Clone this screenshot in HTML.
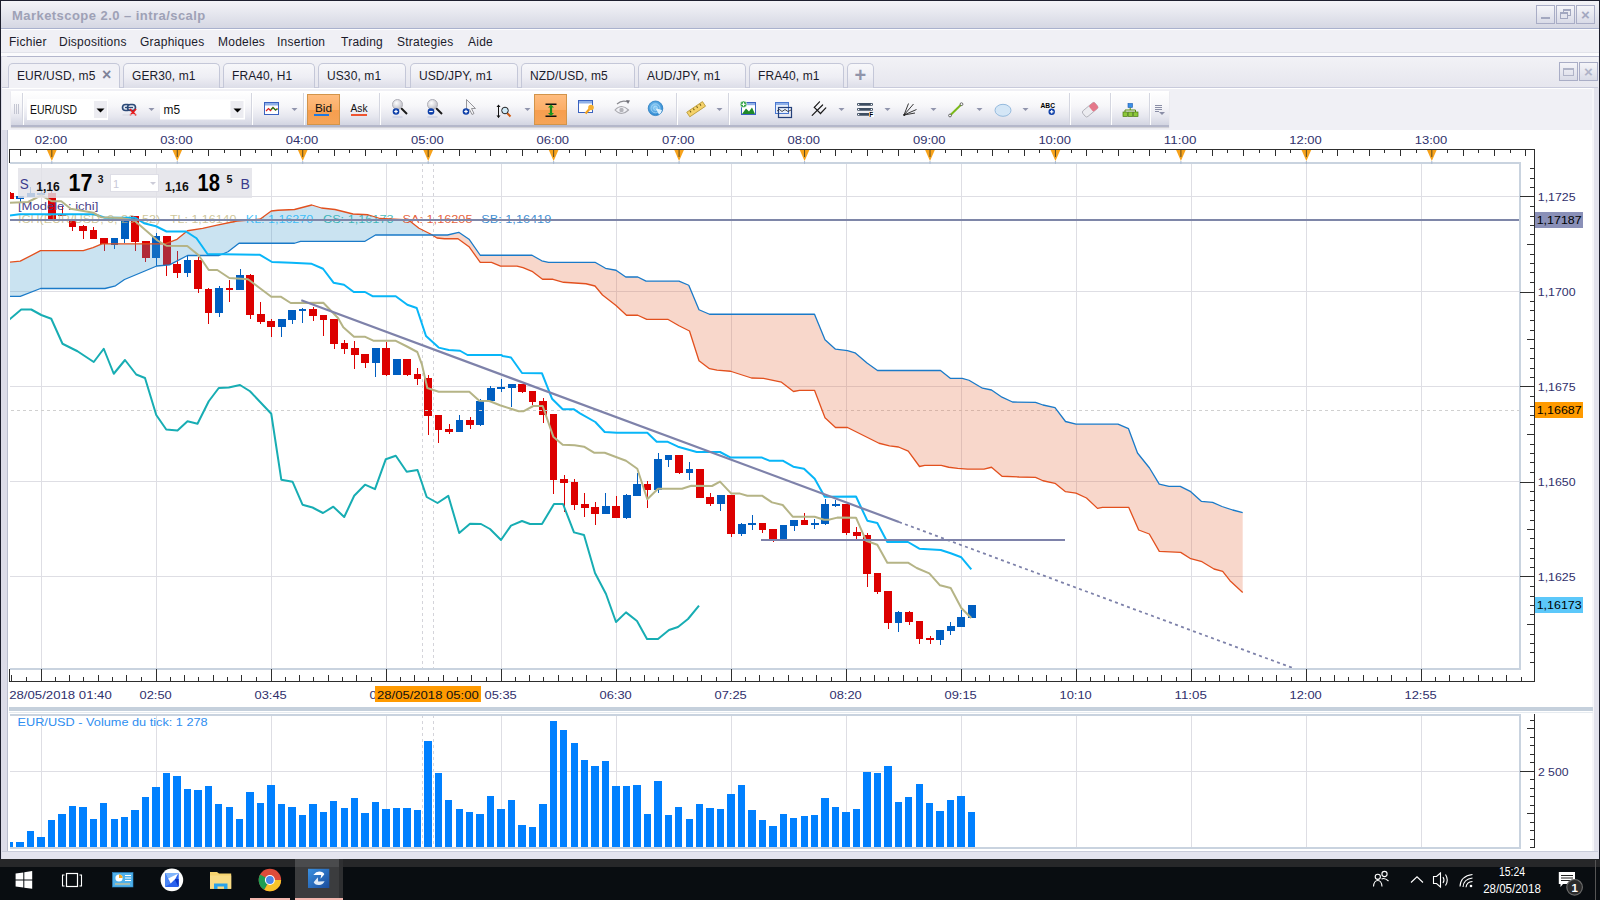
<!DOCTYPE html>
<html><head><meta charset="utf-8">
<style>
*{margin:0;padding:0;box-sizing:border-box}
html,body{width:1600px;height:900px;overflow:hidden;background:#e9e9f1;font-family:"Liberation Sans",sans-serif}
.a{position:absolute}
#frameL{left:0;top:0;width:1px;height:860px;background:#1c1e2c}
#frameR{left:1599px;top:0;width:1px;height:860px;background:#1c1e2c}
#title{left:0;top:0;width:1600px;height:29px;background:linear-gradient(#f4f4f8,#d5d7e3);border-top:1px solid #1e2030;border-bottom:1px solid #a9b1cd}
#title span{position:absolute;left:12px;top:7px;font-size:13px;font-weight:bold;color:#9ea1b6;letter-spacing:0.45px}
.wb{position:absolute;top:4px;width:19px;height:19px;border:1px solid #a9adc6;background:linear-gradient(#f5f5f9,#d9dbe7)}
#menu{left:0;top:29px;width:1600px;height:28px;background:#f0f0f5;border-top:1px solid #fdfdfe;border-bottom:1px solid #b3b6cc;box-shadow:inset 0 -3px 0 #fbfbfd,inset 0 -4px 0 #e2e3ea}
#menu span{position:absolute;top:4.5px;font-size:12px;color:#1b1b2b;letter-spacing:0.25px}
#tabs{left:2px;top:57px;width:1596px;height:31px;background:linear-gradient(#f2f2f6,#e6e6ee);border-bottom:1px solid #c8cadb}
.tab{position:absolute;top:6px;height:25px;border:1px solid #c4c7d8;border-bottom:none;border-radius:5px 5px 0 0;background:linear-gradient(#f7f7fa 0%,#eeeef4 55%,#dcdde8 100%);font-size:12px;color:#1b1b2b;padding:5px 0 0 8px;letter-spacing:0.1px}
.tab.act{background:#f1f1f6;height:26px;padding-left:8px}
#band{left:2px;top:88px;width:1596px;height:42px;background:#f0f0f5;border-top:1px solid #fff}
#tb{left:11px;top:91px;width:1158px;height:36px;background:linear-gradient(#ffffff 0%,#f6f6f9 45%,#e6e7ef 75%,#d3d5e2 100%);border-bottom:2px solid #b4b7ca;box-shadow:0 1px 1px rgba(0,0,0,0.12)}
.cb{position:absolute;top:9px;height:21px;background:#fff;font-size:12px;color:#111;padding:4px 0 0 3px}
.sep{position:absolute;top:4px;width:1px;height:28px;background:#d6d8e2;border-right:1px solid #fff}
.dd{position:absolute;top:17px;width:0;height:0;border-left:4px solid transparent;border-right:4px solid transparent;border-top:4px solid #8f93a8}
#white{left:8px;top:130px;width:1585px;height:722px;background:#fff}
#rbar{left:1592px;top:88px;width:7px;height:772px;background:#e2e2ec;border-left:2px solid #f6f6f9}
#bbar{left:2px;top:851px;width:1596px;height:8px;background:#e4e4ee;border-top:1px solid #c9ccda}
#lbar{left:1px;top:56px;width:7px;height:804px;background:#dcdce8;border-right:1px solid #b9bdcd}
#taskbar{left:0;top:859px;width:1600px;height:41px;background:linear-gradient(#2b2e33 0%,#15181c 15%,#0a0d11 100%)}
svg text{font-family:"Liberation Sans",sans-serif}
.ti{position:absolute;top:0;height:41px}
</style></head><body>
<div id="title" class="a"><span>Marketscope 2.0 – intra/scalp</span>
<div class="wb" style="left:1536px"><div style="position:absolute;left:4px;top:11px;width:9px;height:2px;background:#a3a8c0"></div></div>
<div class="wb" style="left:1556px"><div style="position:absolute;left:6px;top:3px;width:8px;height:7px;border:1.5px solid #a3a8c0;border-top-width:2px"></div><div style="position:absolute;left:3px;top:6px;width:8px;height:7px;border:1.5px solid #a3a8c0;border-top-width:2px;background:#e4e5ee"></div></div>
<div class="wb" style="left:1576px;color:#a3a8c0;font-size:15px;font-weight:bold;text-align:center;line-height:17px">&#215;</div>
</div>
<div id="menu" class="a">
<span style="left:9px">Fichier</span><span style="left:59px">Dispositions</span><span style="left:140px">Graphiques</span><span style="left:218px">Modeles</span><span style="left:277px">Insertion</span><span style="left:341px">Trading</span><span style="left:397px">Strategies</span><span style="left:468px">Aide</span>
</div>
<div id="lbar" class="a"></div>
<div id="tabs" class="a">
<div class="tab act" style="left:6px;width:112px">EUR/USD, m5<span style="position:absolute;left:93px;top:2px;font-size:16px;font-weight:bold;color:#7f8399">&#215;</span></div>
<div class="tab" style="left:121px;width:97px">GER30, m1</div>
<div class="tab" style="left:221px;width:92px">FRA40, H1</div>
<div class="tab" style="left:316px;width:88px">US30, m1</div>
<div class="tab" style="left:408px;width:108px">USD/JPY, m1</div>
<div class="tab" style="left:519px;width:114px">NZD/USD, m5</div>
<div class="tab" style="left:636px;width:108px">AUD/JPY, m1</div>
<div class="tab" style="left:747px;width:95px">FRA40, m1</div>
<div class="tab" style="left:845px;width:27px;padding:0;text-align:center;font-size:20px;font-weight:bold;line-height:22px;color:#9094aa">+</div>
<div class="wb" style="left:1557px;top:5px"><div style="position:absolute;left:3px;top:5px;width:11px;height:8px;border:1.5px solid #b0b4c8;border-top-width:2px"></div></div>
<div class="wb" style="left:1577px;top:5px;color:#b0b4c8;font-size:15px;font-weight:bold;text-align:center;line-height:17px">&#215;</div>
</div>
<div id="band" class="a"></div>
<div id="white" class="a"></div>
<div id="rbar" class="a"></div>
<div id="bbar" class="a"></div>
<svg class="a" style="left:0;top:0" width="1600" height="860">
<defs><clipPath id="plot"><rect x="10" y="163" width="1510" height="506"/></clipPath><clipPath id="vplot"><rect x="10" y="715" width="1510" height="133"/></clipPath><clipPath id="cl1"><rect x="0" y="0" width="432.5" height="900"/></clipPath><clipPath id="cl2"><rect x="432.5" y="0" width="1200" height="900"/></clipPath></defs>
<g shape-rendering="crispEdges" stroke="#dedee4" stroke-width="1">
<line x1="41.5" y1="163" x2="41.5" y2="669"/>
<line x1="41.5" y1="715" x2="41.5" y2="848"/>
<line x1="156.5" y1="163" x2="156.5" y2="669"/>
<line x1="156.5" y1="715" x2="156.5" y2="848"/>
<line x1="271.5" y1="163" x2="271.5" y2="669"/>
<line x1="271.5" y1="715" x2="271.5" y2="848"/>
<line x1="386.5" y1="163" x2="386.5" y2="669"/>
<line x1="386.5" y1="715" x2="386.5" y2="848"/>
<line x1="501.5" y1="163" x2="501.5" y2="669"/>
<line x1="501.5" y1="715" x2="501.5" y2="848"/>
<line x1="616.5" y1="163" x2="616.5" y2="669"/>
<line x1="616.5" y1="715" x2="616.5" y2="848"/>
<line x1="731.5" y1="163" x2="731.5" y2="669"/>
<line x1="731.5" y1="715" x2="731.5" y2="848"/>
<line x1="846.5" y1="163" x2="846.5" y2="669"/>
<line x1="846.5" y1="715" x2="846.5" y2="848"/>
<line x1="961.5" y1="163" x2="961.5" y2="669"/>
<line x1="961.5" y1="715" x2="961.5" y2="848"/>
<line x1="1076.5" y1="163" x2="1076.5" y2="669"/>
<line x1="1076.5" y1="715" x2="1076.5" y2="848"/>
<line x1="1191.5" y1="163" x2="1191.5" y2="669"/>
<line x1="1191.5" y1="715" x2="1191.5" y2="848"/>
<line x1="1306.5" y1="163" x2="1306.5" y2="669"/>
<line x1="1306.5" y1="715" x2="1306.5" y2="848"/>
<line x1="1421.5" y1="163" x2="1421.5" y2="669"/>
<line x1="1421.5" y1="715" x2="1421.5" y2="848"/>
<line x1="10" y1="196.5" x2="1520" y2="196.5"/>
<line x1="10" y1="291.5" x2="1520" y2="291.5"/>
<line x1="10" y1="386.5" x2="1520" y2="386.5"/>
<line x1="10" y1="481.5" x2="1520" y2="481.5"/>
<line x1="10" y1="576.5" x2="1520" y2="576.5"/>
<line x1="10" y1="771.5" x2="1520" y2="771.5"/>
</g>
<g shape-rendering="crispEdges" stroke="#d4d4da" stroke-width="1" stroke-dasharray="3,3">
<line x1="422.5" y1="163" x2="422.5" y2="669"/>
<line x1="422.5" y1="715" x2="422.5" y2="848"/>
<line x1="433.5" y1="163" x2="433.5" y2="669"/>
<line x1="433.5" y1="715" x2="433.5" y2="848"/>
</g>
<g clip-path="url(#plot)">
<g shape-rendering="crispEdges">
<rect x="10" y="192" width="1" height="7" fill="#dc0000"/>
<rect x="6" y="193" width="8" height="6" fill="#dc0000"/>
<rect x="20" y="196" width="1" height="6" fill="#005ec0"/>
<rect x="16" y="196" width="8" height="3" fill="#005ec0"/>
<rect x="30" y="187" width="1" height="10" fill="#005ec0"/>
<rect x="27" y="193" width="8" height="4" fill="#005ec0"/>
<rect x="41" y="187" width="1" height="9" fill="#005ec0"/>
<rect x="37" y="193" width="8" height="2" fill="#005ec0"/>
<rect x="51" y="191" width="1" height="28" fill="#dc0000"/>
<rect x="48" y="193" width="8" height="26" fill="#dc0000"/>
<rect x="62" y="206" width="1" height="9" fill="#dc0000"/>
<rect x="58" y="214" width="8" height="2" fill="#dc0000"/>
<rect x="72" y="221" width="1" height="10" fill="#dc0000"/>
<rect x="69" y="221" width="7" height="6" fill="#dc0000"/>
<rect x="83" y="225" width="1" height="14" fill="#dc0000"/>
<rect x="79" y="226" width="8" height="5" fill="#dc0000"/>
<rect x="93" y="227" width="1" height="12" fill="#dc0000"/>
<rect x="90" y="230" width="7" height="9" fill="#dc0000"/>
<rect x="104" y="238" width="1" height="13" fill="#dc0000"/>
<rect x="100" y="238" width="8" height="6" fill="#dc0000"/>
<rect x="114" y="238" width="1" height="11" fill="#005ec0"/>
<rect x="111" y="238" width="7" height="7" fill="#005ec0"/>
<rect x="124" y="219" width="1" height="24" fill="#005ec0"/>
<rect x="121" y="219" width="8" height="20" fill="#005ec0"/>
<rect x="135" y="216" width="1" height="35" fill="#dc0000"/>
<rect x="131" y="216" width="8" height="26" fill="#dc0000"/>
<rect x="145" y="241" width="1" height="21" fill="#dc0000"/>
<rect x="142" y="241" width="8" height="17" fill="#dc0000"/>
<rect x="156" y="233" width="1" height="33" fill="#005ec0"/>
<rect x="152" y="236" width="8" height="22" fill="#005ec0"/>
<rect x="166" y="236" width="1" height="40" fill="#dc0000"/>
<rect x="163" y="236" width="8" height="29" fill="#dc0000"/>
<rect x="177" y="251" width="1" height="27" fill="#dc0000"/>
<rect x="173" y="264" width="8" height="9" fill="#dc0000"/>
<rect x="187" y="256" width="1" height="21" fill="#005ec0"/>
<rect x="184" y="260" width="7" height="13" fill="#005ec0"/>
<rect x="198" y="257" width="1" height="36" fill="#dc0000"/>
<rect x="194" y="260" width="8" height="29" fill="#dc0000"/>
<rect x="208" y="288" width="1" height="36" fill="#dc0000"/>
<rect x="205" y="289" width="7" height="24" fill="#dc0000"/>
<rect x="219" y="286" width="1" height="31" fill="#005ec0"/>
<rect x="215" y="288" width="8" height="25" fill="#005ec0"/>
<rect x="229" y="280" width="1" height="22" fill="#dc0000"/>
<rect x="226" y="288" width="7" height="2" fill="#dc0000"/>
<rect x="240" y="269" width="1" height="21" fill="#005ec0"/>
<rect x="236" y="275" width="8" height="15" fill="#005ec0"/>
<rect x="250" y="274" width="1" height="45" fill="#dc0000"/>
<rect x="246" y="275" width="8" height="40" fill="#dc0000"/>
<rect x="260" y="302" width="1" height="22" fill="#dc0000"/>
<rect x="257" y="314" width="8" height="8" fill="#dc0000"/>
<rect x="271" y="319" width="1" height="18" fill="#dc0000"/>
<rect x="267" y="321" width="8" height="6" fill="#dc0000"/>
<rect x="281" y="319" width="1" height="18" fill="#005ec0"/>
<rect x="278" y="319" width="8" height="8" fill="#005ec0"/>
<rect x="292" y="310" width="1" height="14" fill="#005ec0"/>
<rect x="288" y="310" width="8" height="10" fill="#005ec0"/>
<rect x="302" y="308" width="1" height="15" fill="#005ec0"/>
<rect x="299" y="309" width="7" height="2" fill="#005ec0"/>
<rect x="313" y="307" width="1" height="14" fill="#dc0000"/>
<rect x="309" y="309" width="8" height="7" fill="#dc0000"/>
<rect x="323" y="315" width="1" height="21" fill="#dc0000"/>
<rect x="320" y="315" width="7" height="5" fill="#dc0000"/>
<rect x="334" y="319" width="1" height="30" fill="#dc0000"/>
<rect x="330" y="319" width="8" height="25" fill="#dc0000"/>
<rect x="344" y="340" width="1" height="14" fill="#dc0000"/>
<rect x="341" y="343" width="7" height="6" fill="#dc0000"/>
<rect x="354" y="341" width="1" height="28" fill="#dc0000"/>
<rect x="351" y="348" width="8" height="7" fill="#dc0000"/>
<rect x="365" y="354" width="1" height="14" fill="#dc0000"/>
<rect x="361" y="354" width="8" height="9" fill="#dc0000"/>
<rect x="375" y="348" width="1" height="29" fill="#005ec0"/>
<rect x="372" y="348" width="8" height="15" fill="#005ec0"/>
<rect x="386" y="342" width="1" height="34" fill="#dc0000"/>
<rect x="382" y="348" width="8" height="27" fill="#dc0000"/>
<rect x="396" y="359" width="1" height="16" fill="#005ec0"/>
<rect x="393" y="359" width="8" height="16" fill="#005ec0"/>
<rect x="407" y="359" width="1" height="17" fill="#dc0000"/>
<rect x="403" y="359" width="8" height="16" fill="#dc0000"/>
<rect x="417" y="368" width="1" height="17" fill="#dc0000"/>
<rect x="414" y="374" width="7" height="5" fill="#dc0000"/>
<rect x="428" y="375" width="1" height="60" fill="#dc0000"/>
<rect x="424" y="378" width="8" height="38" fill="#dc0000"/>
<rect x="438" y="415" width="1" height="28" fill="#dc0000"/>
<rect x="435" y="415" width="7" height="15" fill="#dc0000"/>
<rect x="449" y="424" width="1" height="10" fill="#dc0000"/>
<rect x="445" y="429" width="8" height="3" fill="#dc0000"/>
<rect x="459" y="415" width="1" height="17" fill="#005ec0"/>
<rect x="456" y="420" width="7" height="12" fill="#005ec0"/>
<rect x="470" y="417" width="1" height="12" fill="#dc0000"/>
<rect x="466" y="420" width="8" height="5" fill="#dc0000"/>
<rect x="480" y="399" width="1" height="27" fill="#005ec0"/>
<rect x="476" y="401" width="8" height="24" fill="#005ec0"/>
<rect x="490" y="386" width="1" height="15" fill="#005ec0"/>
<rect x="487" y="388" width="8" height="13" fill="#005ec0"/>
<rect x="501" y="379" width="1" height="13" fill="#005ec0"/>
<rect x="497" y="387" width="8" height="2" fill="#005ec0"/>
<rect x="511" y="384" width="1" height="23" fill="#005ec0"/>
<rect x="508" y="384" width="8" height="4" fill="#005ec0"/>
<rect x="522" y="384" width="1" height="9" fill="#dc0000"/>
<rect x="518" y="384" width="8" height="8" fill="#dc0000"/>
<rect x="532" y="391" width="1" height="14" fill="#dc0000"/>
<rect x="529" y="391" width="7" height="11" fill="#dc0000"/>
<rect x="543" y="398" width="1" height="25" fill="#dc0000"/>
<rect x="539" y="401" width="8" height="14" fill="#dc0000"/>
<rect x="553" y="414" width="1" height="80" fill="#dc0000"/>
<rect x="550" y="414" width="7" height="66" fill="#dc0000"/>
<rect x="564" y="475" width="1" height="37" fill="#dc0000"/>
<rect x="560" y="479" width="8" height="4" fill="#dc0000"/>
<rect x="574" y="479" width="1" height="31" fill="#dc0000"/>
<rect x="571" y="482" width="7" height="23" fill="#dc0000"/>
<rect x="584" y="493" width="1" height="24" fill="#dc0000"/>
<rect x="581" y="504" width="8" height="4" fill="#dc0000"/>
<rect x="595" y="502" width="1" height="23" fill="#dc0000"/>
<rect x="591" y="507" width="8" height="7" fill="#dc0000"/>
<rect x="605" y="493" width="1" height="21" fill="#005ec0"/>
<rect x="602" y="506" width="8" height="8" fill="#005ec0"/>
<rect x="616" y="496" width="1" height="22" fill="#dc0000"/>
<rect x="612" y="506" width="8" height="12" fill="#dc0000"/>
<rect x="626" y="494" width="1" height="25" fill="#005ec0"/>
<rect x="623" y="495" width="8" height="23" fill="#005ec0"/>
<rect x="637" y="473" width="1" height="23" fill="#005ec0"/>
<rect x="633" y="484" width="8" height="12" fill="#005ec0"/>
<rect x="647" y="481" width="1" height="27" fill="#dc0000"/>
<rect x="644" y="484" width="7" height="6" fill="#dc0000"/>
<rect x="658" y="453" width="1" height="40" fill="#005ec0"/>
<rect x="654" y="459" width="8" height="31" fill="#005ec0"/>
<rect x="668" y="455" width="1" height="12" fill="#005ec0"/>
<rect x="665" y="455" width="7" height="5" fill="#005ec0"/>
<rect x="679" y="455" width="1" height="19" fill="#dc0000"/>
<rect x="675" y="455" width="8" height="18" fill="#dc0000"/>
<rect x="689" y="462" width="1" height="18" fill="#005ec0"/>
<rect x="686" y="469" width="7" height="4" fill="#005ec0"/>
<rect x="700" y="469" width="1" height="29" fill="#dc0000"/>
<rect x="696" y="469" width="8" height="29" fill="#dc0000"/>
<rect x="710" y="493" width="1" height="13" fill="#dc0000"/>
<rect x="706" y="497" width="8" height="7" fill="#dc0000"/>
<rect x="720" y="495" width="1" height="16" fill="#005ec0"/>
<rect x="717" y="495" width="8" height="9" fill="#005ec0"/>
<rect x="731" y="495" width="1" height="42" fill="#dc0000"/>
<rect x="727" y="495" width="8" height="39" fill="#dc0000"/>
<rect x="741" y="523" width="1" height="13" fill="#005ec0"/>
<rect x="738" y="524" width="8" height="10" fill="#005ec0"/>
<rect x="752" y="515" width="1" height="15" fill="#005ec0"/>
<rect x="748" y="523" width="8" height="2" fill="#005ec0"/>
<rect x="762" y="523" width="1" height="10" fill="#dc0000"/>
<rect x="759" y="523" width="7" height="7" fill="#dc0000"/>
<rect x="773" y="529" width="1" height="13" fill="#dc0000"/>
<rect x="769" y="529" width="8" height="10" fill="#dc0000"/>
<rect x="783" y="525" width="1" height="14" fill="#005ec0"/>
<rect x="780" y="525" width="7" height="14" fill="#005ec0"/>
<rect x="794" y="520" width="1" height="11" fill="#005ec0"/>
<rect x="790" y="520" width="8" height="6" fill="#005ec0"/>
<rect x="804" y="513" width="1" height="12" fill="#dc0000"/>
<rect x="801" y="520" width="7" height="5" fill="#dc0000"/>
<rect x="814" y="519" width="1" height="10" fill="#005ec0"/>
<rect x="811" y="523" width="8" height="2" fill="#005ec0"/>
<rect x="825" y="499" width="1" height="26" fill="#005ec0"/>
<rect x="821" y="504" width="8" height="20" fill="#005ec0"/>
<rect x="835" y="500" width="1" height="7" fill="#005ec0"/>
<rect x="832" y="504" width="8" height="2" fill="#005ec0"/>
<rect x="846" y="504" width="1" height="31" fill="#dc0000"/>
<rect x="842" y="504" width="8" height="29" fill="#dc0000"/>
<rect x="856" y="527" width="1" height="12" fill="#dc0000"/>
<rect x="853" y="532" width="8" height="4" fill="#dc0000"/>
<rect x="867" y="533" width="1" height="54" fill="#dc0000"/>
<rect x="863" y="535" width="8" height="39" fill="#dc0000"/>
<rect x="877" y="573" width="1" height="21" fill="#dc0000"/>
<rect x="874" y="573" width="7" height="19" fill="#dc0000"/>
<rect x="888" y="591" width="1" height="38" fill="#dc0000"/>
<rect x="884" y="591" width="8" height="32" fill="#dc0000"/>
<rect x="898" y="611" width="1" height="21" fill="#005ec0"/>
<rect x="895" y="612" width="7" height="11" fill="#005ec0"/>
<rect x="909" y="611" width="1" height="14" fill="#dc0000"/>
<rect x="905" y="612" width="8" height="10" fill="#dc0000"/>
<rect x="919" y="621" width="1" height="23" fill="#dc0000"/>
<rect x="916" y="621" width="7" height="18" fill="#dc0000"/>
<rect x="930" y="636" width="1" height="8" fill="#dc0000"/>
<rect x="926" y="638" width="8" height="2" fill="#dc0000"/>
<rect x="940" y="630" width="1" height="15" fill="#005ec0"/>
<rect x="936" y="630" width="8" height="10" fill="#005ec0"/>
<rect x="950" y="622" width="1" height="13" fill="#005ec0"/>
<rect x="947" y="626" width="8" height="5" fill="#005ec0"/>
<rect x="961" y="610" width="1" height="17" fill="#005ec0"/>
<rect x="957" y="617" width="8" height="10" fill="#005ec0"/>
<rect x="971" y="605" width="1" height="13" fill="#005ec0"/>
<rect x="968" y="605" width="8" height="13" fill="#005ec0"/>
</g>
<line x1="10" y1="410.5" x2="1520" y2="410.5" stroke-dasharray="3,3" stroke-dashoffset="-1" stroke="#d0d0d0" stroke-width="1" shape-rendering="crispEdges"/>
<polygon points="9,262.3 20.25,261.2 40.5,250.7 83.25,250.7 93,247.7 102,243.8 165,243.8 177,239.3 187.5,230.75 202.7,228.3 216,225.3 237,221 260,219.25 271.25,211 278,210.25 294.5,209.5 311.75,205 321.5,208 335,209.5 353,214 368,214.75 380,218.5 408.5,220 419,228.25 431,234.25 437,238 444.5,238.75 458,238.75 469,246.7 480.25,262.3 491.5,262.3 500.5,266.2 517,266.2 523,267.7 532,271.3 542.5,279.25 553,279.25 563.5,282.25 586,283.75 595,286 602.5,295 616,305.5 626.5,315.25 637.75,315.25 646.75,319.3 667.75,319.3 679,325.75 689.5,331 699,360.75 709.5,368.7 717,370.2 730.5,371.25 751.5,378 763.5,378.3 781.5,382.2 793.5,391.5 799.5,390.3 814.5,390.3 825,417.75 835.5,427.5 847.5,427.5 879,443.25 889.5,445.8 898.5,447 908.25,451.2 919.5,466.5 924.75,465.3 941.25,465.3 948.75,467.25 957.75,468.3 967.5,469.2 984,469.2 991.5,467.25 1002,476.25 1019,477 1035.5,477.3 1043,480.75 1055,483.3 1065.5,491.7 1076,493.2 1086.5,498 1097.5,508.4 1102.5,507.3 1128.7,507.3 1138.7,530 1149.3,534 1159.3,551.3 1180.7,552.4 1190.7,558.7 1202,561.7 1214,569 1222.7,571.3 1230,580.7 1242.7,592.4 1242.7,512.7 1232.7,510 1222,506.5 1212.6,502.4 1201.3,501.3 1190.75,491.7 1180.25,486.3 1169,486.3 1159.25,484.2 1149.5,468 1137.5,453 1128.5,428.7 1118,424.2 1076,424.2 1065.5,421.5 1055,407.7 1043,405 1035.5,402.3 1012.5,402 1002,397.2 991.5,390 982.5,388.2 969,380.25 962.25,378.3 950.25,378.3 940.5,370.5 877.5,370.5 867,363 855,352.8 847.5,350.7 835.5,349.2 825,339.75 814.5,314.25 709.5,314.25 699,309.75 688.75,285.25 679,281.2 646,281.2 637.75,277 625.75,277 616,270.25 605.5,268.3 595,262.3 548.5,262.3 541.75,260.8 532,255.25 480.25,255.25 469,239.2 458.75,232.3 447.5,235 375.5,235 365,241.3 300.5,241.3 294.5,243.25 239,243.25 228,251.75 219,255.5 187.5,255.5 169.5,264.8 156.75,266 142.5,272 124.5,279.5 115.5,285.8 105,288.5 40.5,288.5 20.25,296.3 9,296.3" fill="rgba(60,150,205,0.27)" clip-path="url(#cl1)"/>
<polygon points="9,262.3 20.25,261.2 40.5,250.7 83.25,250.7 93,247.7 102,243.8 165,243.8 177,239.3 187.5,230.75 202.7,228.3 216,225.3 237,221 260,219.25 271.25,211 278,210.25 294.5,209.5 311.75,205 321.5,208 335,209.5 353,214 368,214.75 380,218.5 408.5,220 419,228.25 431,234.25 437,238 444.5,238.75 458,238.75 469,246.7 480.25,262.3 491.5,262.3 500.5,266.2 517,266.2 523,267.7 532,271.3 542.5,279.25 553,279.25 563.5,282.25 586,283.75 595,286 602.5,295 616,305.5 626.5,315.25 637.75,315.25 646.75,319.3 667.75,319.3 679,325.75 689.5,331 699,360.75 709.5,368.7 717,370.2 730.5,371.25 751.5,378 763.5,378.3 781.5,382.2 793.5,391.5 799.5,390.3 814.5,390.3 825,417.75 835.5,427.5 847.5,427.5 879,443.25 889.5,445.8 898.5,447 908.25,451.2 919.5,466.5 924.75,465.3 941.25,465.3 948.75,467.25 957.75,468.3 967.5,469.2 984,469.2 991.5,467.25 1002,476.25 1019,477 1035.5,477.3 1043,480.75 1055,483.3 1065.5,491.7 1076,493.2 1086.5,498 1097.5,508.4 1102.5,507.3 1128.7,507.3 1138.7,530 1149.3,534 1159.3,551.3 1180.7,552.4 1190.7,558.7 1202,561.7 1214,569 1222.7,571.3 1230,580.7 1242.7,592.4 1242.7,512.7 1232.7,510 1222,506.5 1212.6,502.4 1201.3,501.3 1190.75,491.7 1180.25,486.3 1169,486.3 1159.25,484.2 1149.5,468 1137.5,453 1128.5,428.7 1118,424.2 1076,424.2 1065.5,421.5 1055,407.7 1043,405 1035.5,402.3 1012.5,402 1002,397.2 991.5,390 982.5,388.2 969,380.25 962.25,378.3 950.25,378.3 940.5,370.5 877.5,370.5 867,363 855,352.8 847.5,350.7 835.5,349.2 825,339.75 814.5,314.25 709.5,314.25 699,309.75 688.75,285.25 679,281.2 646,281.2 637.75,277 625.75,277 616,270.25 605.5,268.3 595,262.3 548.5,262.3 541.75,260.8 532,255.25 480.25,255.25 469,239.2 458.75,232.3 447.5,235 375.5,235 365,241.3 300.5,241.3 294.5,243.25 239,243.25 228,251.75 219,255.5 187.5,255.5 169.5,264.8 156.75,266 142.5,272 124.5,279.5 115.5,285.8 105,288.5 40.5,288.5 20.25,296.3 9,296.3" fill="rgba(230,110,70,0.28)" clip-path="url(#cl2)"/>
<text x="17.9" y="222.6" font-size="10.5" fill="rgba(190,180,120,0.75)" textLength="142.3" lengthAdjust="spacingAndGlyphs">ICH(EUR/USD, 9, 26, 52)</text>
<text x="170" y="222.6" font-size="10.5" fill="rgba(190,180,120,0.75)" textLength="66.4" lengthAdjust="spacingAndGlyphs">TL: 1,16140</text>
<text x="245.8" y="222.6" font-size="10.5" fill="rgba(20,180,250,0.8)" textLength="67.4" lengthAdjust="spacingAndGlyphs">KL: 1,16270</text>
<text x="323" y="222.6" font-size="10.5" fill="rgba(20,170,170,0.8)" textLength="70.5" lengthAdjust="spacingAndGlyphs">CS: 1,16173</text>
<text x="402.5" y="222.6" font-size="10.5" fill="rgba(225,70,20,0.85)" textLength="70" lengthAdjust="spacingAndGlyphs">SA: 1,16205</text>
<text x="481.25" y="222.6" font-size="10.5" fill="rgba(20,120,200,0.85)" textLength="70" lengthAdjust="spacingAndGlyphs">SB: 1,16419</text>
<text x="17.9" y="209.6" font-size="10.5" fill="#4a3f8a" textLength="80.5" lengthAdjust="spacingAndGlyphs">[Modele : ichi]</text>
<polyline points="9,262.3 20.25,261.2 40.5,250.7 83.25,250.7 93,247.7 102,243.8 165,243.8 177,239.3 187.5,230.75 202.7,228.3 216,225.3 237,221 260,219.25 271.25,211 278,210.25 294.5,209.5 311.75,205 321.5,208 335,209.5 353,214 368,214.75 380,218.5 408.5,220 419,228.25 431,234.25 437,238 444.5,238.75 458,238.75 469,246.7 480.25,262.3 491.5,262.3 500.5,266.2 517,266.2 523,267.7 532,271.3 542.5,279.25 553,279.25 563.5,282.25 586,283.75 595,286 602.5,295 616,305.5 626.5,315.25 637.75,315.25 646.75,319.3 667.75,319.3 679,325.75 689.5,331 699,360.75 709.5,368.7 717,370.2 730.5,371.25 751.5,378 763.5,378.3 781.5,382.2 793.5,391.5 799.5,390.3 814.5,390.3 825,417.75 835.5,427.5 847.5,427.5 879,443.25 889.5,445.8 898.5,447 908.25,451.2 919.5,466.5 924.75,465.3 941.25,465.3 948.75,467.25 957.75,468.3 967.5,469.2 984,469.2 991.5,467.25 1002,476.25 1019,477 1035.5,477.3 1043,480.75 1055,483.3 1065.5,491.7 1076,493.2 1086.5,498 1097.5,508.4 1102.5,507.3 1128.7,507.3 1138.7,530 1149.3,534 1159.3,551.3 1180.7,552.4 1190.7,558.7 1202,561.7 1214,569 1222.7,571.3 1230,580.7 1242.7,592.4" fill="none" stroke="#e2501e" stroke-width="1.3" stroke-linejoin="round" />
<polyline points="9,296.3 20.25,296.3 40.5,288.5 105,288.5 115.5,285.8 124.5,279.5 142.5,272 156.75,266 169.5,264.8 187.5,255.5 219,255.5 228,251.75 239,243.25 294.5,243.25 300.5,241.3 365,241.3 375.5,235 447.5,235 458.75,232.3 469,239.2 480.25,255.25 532,255.25 541.75,260.8 548.5,262.3 595,262.3 605.5,268.3 616,270.25 625.75,277 637.75,277 646,281.2 679,281.2 688.75,285.25 699,309.75 709.5,314.25 814.5,314.25 825,339.75 835.5,349.2 847.5,350.7 855,352.8 867,363 877.5,370.5 940.5,370.5 950.25,378.3 962.25,378.3 969,380.25 982.5,388.2 991.5,390 1002,397.2 1012.5,402 1035.5,402.3 1043,405 1055,407.7 1065.5,421.5 1076,424.2 1118,424.2 1128.5,428.7 1137.5,453 1149.5,468 1159.25,484.2 1169,486.3 1180.25,486.3 1190.75,491.7 1201.3,501.3 1212.6,502.4 1222,506.5 1232.7,510 1242.7,512.7" fill="none" stroke="#1a7ac8" stroke-width="1.3" stroke-linejoin="round" />
<polyline points="8.75,320 21.25,309.5 31.25,309.5 41.25,315 51.25,318.75 62.5,343.75 77.5,351.25 93.75,362 103.75,348.75 113.75,373.75 125,360 136.25,374.5 145,378 156.25,415 166.25,429.5 177.5,430.5 187.5,421.25 197.5,423.75 208.75,401.25 218.75,388 228.75,387.5 240,385 250,391.25 271.25,413.75 281.3,479.7 292.5,481.7 302.5,504.7 312.5,507.5 323,513 333.3,506.7 344.2,517 354.2,495.8 365,484.7 375,489.2 385.8,459.2 395.8,455.8 406.7,471.7 417.5,470 426.7,497 437.5,503 448.3,495.8 459.2,533 470,523.7 481,524 490,529 501,540 511,525.6 522,521 530,524 542,524 554,504 563,504 574,532.4 584,535 595,573 606,594 616,622 626,612.4 637,621 647,639 658,639 669,630 678,627 688,619 699,605.6" fill="none" stroke="#17adb3" stroke-width="2" stroke-linejoin="round" />
<polyline points="9,215.75 19.5,214.25 94.5,214.25 105,217.7 135,217.7 144,223.25 156,226.25 166.5,231.5 186,231.5 196.5,238.25 207.5,254 260,254.8 272,262 291.5,262.75 311.75,263.8 323,268.75 333.5,282.7 344,284.8 353.75,292 365,292 372.5,296.2 395.75,296.2 407.3,304.7 416.7,308 426,336 438.7,347.6 448.7,350 460,350.75 467.5,355 501.5,355 502.5,356 511,357.5 522,373 542,373.3 552,398.7 562.7,409.3 574,409.3 580,413.3 595.3,422 604.7,432 616.7,432.7 647.3,432.7 656.7,441.7 667.3,441.7 678,446.7 696.7,452 720,452 730.7,457.6 762,457.6 769.3,460.7 782.7,460.7 793.3,466.7 804,468.7 814.7,478.7 824.7,496.7 856,496.5 867.3,520.7 877.3,523 887.3,542 908,542 919.3,548.7 940.7,550 950.7,553.3 961.3,557.3 971.3,569.3" fill="none" stroke="#08b6f8" stroke-width="2" stroke-linejoin="round" />
<polyline points="8,202.7 28,202 41.3,195.3 52,201.3 61.3,201.3 70.7,208.7 93.3,212.7 101.3,217.3 121.3,218 134.7,220.7 157.5,240.5 166.5,245.75 187.3,246 198.7,255.3 208.7,270 217.3,270 229.3,278 248,279.3 271.3,296.7 280.7,296.7 290.7,303 323.3,302.7 338,318 343.3,327.3 354,336.7 364.7,336.7 373.3,340.7 395.3,340.7 406,346 417.3,352 422,364.7 427.3,388 438.7,391.7 469.3,391.7 479.3,400.7 489.3,401 500,405.3 518.7,411.3 523.3,411.3 533.3,406 542.7,406 553.3,436.7 562.7,444.7 574.7,445.3 584,446.7 594,452.7 604.7,452.7 615.3,456.7 626,460.7 637.3,468.7 647.3,499.3 658,488.7 682,488.7 691.3,485.7 712,486 720,481.6 731.3,493.6 740,493.6 747.3,495.7 762,495.7 772,502.4 782.7,505 792.7,516.7 814.7,516.7 824,519.7 828.7,519.7 837.3,517.6 856,517.7 866,540.7 877.3,544.7 887.3,562.7 908,562.7 916.7,568 929.3,573.3 940,585.3 950.7,588 961.3,608 971.3,618" fill="none" stroke="#b5b486" stroke-width="2" stroke-linejoin="round" />
<line x1="301.3" y1="300.3" x2="899" y2="522" stroke="#7e82aa" stroke-width="2.2"/>
<line x1="899" y1="522" x2="1300" y2="670.7" stroke="#7e82aa" stroke-width="1.8" stroke-dasharray="3,3.4"/>
<line x1="761" y1="540" x2="1065" y2="540" stroke="#7e82aa" stroke-width="2" shape-rendering="crispEdges"/>
<line x1="10" y1="220" x2="1520" y2="220" stroke="#7e86a8" stroke-width="2" shape-rendering="crispEdges"/>
</g>
<g clip-path="url(#vplot)" shape-rendering="crispEdges" fill="#0080ff">
<rect x="6" y="842" width="7" height="6"/>
<rect x="16" y="842" width="8" height="6"/>
<rect x="27" y="831" width="7" height="17"/>
<rect x="37" y="837" width="8" height="11"/>
<rect x="48" y="820" width="7" height="28"/>
<rect x="58" y="814" width="8" height="34"/>
<rect x="69" y="806" width="7" height="42"/>
<rect x="79" y="807" width="8" height="41"/>
<rect x="90" y="819" width="7" height="29"/>
<rect x="100" y="803" width="7" height="45"/>
<rect x="111" y="819" width="7" height="29"/>
<rect x="121" y="817" width="7" height="31"/>
<rect x="131" y="810" width="8" height="38"/>
<rect x="142" y="797" width="7" height="51"/>
<rect x="152" y="787" width="8" height="61"/>
<rect x="163" y="773" width="7" height="75"/>
<rect x="173" y="776" width="8" height="72"/>
<rect x="184" y="789" width="7" height="59"/>
<rect x="194" y="790" width="8" height="58"/>
<rect x="205" y="786" width="7" height="62"/>
<rect x="215" y="804" width="7" height="44"/>
<rect x="226" y="807" width="7" height="41"/>
<rect x="236" y="819" width="7" height="29"/>
<rect x="246" y="792" width="8" height="56"/>
<rect x="257" y="803" width="7" height="45"/>
<rect x="267" y="785" width="8" height="63"/>
<rect x="278" y="804" width="7" height="44"/>
<rect x="288" y="807" width="8" height="41"/>
<rect x="299" y="815" width="7" height="33"/>
<rect x="309" y="804" width="8" height="44"/>
<rect x="320" y="812" width="7" height="36"/>
<rect x="330" y="801" width="7" height="47"/>
<rect x="341" y="808" width="7" height="40"/>
<rect x="351" y="798" width="7" height="50"/>
<rect x="361" y="813" width="8" height="35"/>
<rect x="372" y="802" width="7" height="46"/>
<rect x="382" y="809" width="8" height="39"/>
<rect x="393" y="808" width="7" height="40"/>
<rect x="403" y="808" width="8" height="40"/>
<rect x="414" y="810" width="7" height="38"/>
<rect x="424" y="741" width="8" height="107"/>
<rect x="435" y="773" width="7" height="75"/>
<rect x="445" y="800" width="7" height="48"/>
<rect x="456" y="809" width="7" height="39"/>
<rect x="466" y="812" width="7" height="36"/>
<rect x="476" y="814" width="8" height="34"/>
<rect x="487" y="796" width="7" height="52"/>
<rect x="497" y="809" width="8" height="39"/>
<rect x="508" y="800" width="7" height="48"/>
<rect x="518" y="825" width="8" height="23"/>
<rect x="529" y="827" width="7" height="21"/>
<rect x="539" y="804" width="8" height="44"/>
<rect x="550" y="721" width="7" height="127"/>
<rect x="560" y="730" width="7" height="118"/>
<rect x="571" y="743" width="7" height="105"/>
<rect x="581" y="760" width="7" height="88"/>
<rect x="591" y="766" width="8" height="82"/>
<rect x="602" y="761" width="7" height="87"/>
<rect x="612" y="786" width="8" height="62"/>
<rect x="623" y="786" width="7" height="62"/>
<rect x="633" y="785" width="8" height="63"/>
<rect x="644" y="814" width="7" height="34"/>
<rect x="654" y="781" width="8" height="67"/>
<rect x="665" y="815" width="7" height="33"/>
<rect x="675" y="807" width="7" height="41"/>
<rect x="686" y="819" width="7" height="29"/>
<rect x="696" y="804" width="7" height="44"/>
<rect x="706" y="808" width="8" height="40"/>
<rect x="717" y="809" width="7" height="39"/>
<rect x="727" y="794" width="8" height="54"/>
<rect x="738" y="785" width="7" height="63"/>
<rect x="748" y="810" width="8" height="38"/>
<rect x="759" y="820" width="7" height="28"/>
<rect x="769" y="826" width="8" height="22"/>
<rect x="780" y="814" width="7" height="34"/>
<rect x="790" y="818" width="7" height="30"/>
<rect x="801" y="816" width="7" height="32"/>
<rect x="811" y="815" width="7" height="33"/>
<rect x="821" y="798" width="8" height="50"/>
<rect x="832" y="807" width="7" height="41"/>
<rect x="842" y="812" width="8" height="36"/>
<rect x="853" y="809" width="7" height="39"/>
<rect x="863" y="772" width="8" height="76"/>
<rect x="874" y="773" width="7" height="75"/>
<rect x="884" y="766" width="8" height="82"/>
<rect x="895" y="802" width="7" height="46"/>
<rect x="905" y="797" width="7" height="51"/>
<rect x="916" y="784" width="7" height="64"/>
<rect x="926" y="803" width="7" height="45"/>
<rect x="936" y="811" width="8" height="37"/>
<rect x="947" y="800" width="7" height="48"/>
<rect x="957" y="796" width="8" height="52"/>
<rect x="968" y="812" width="7" height="36"/>
</g>
<g shape-rendering="crispEdges" fill="none" stroke="#c9d3df" stroke-width="2">
<path d="M10,163 H1520 V669 H10 M10,715 H1520 V848 H10"/>
</g>
<g shape-rendering="crispEdges" stroke="#2e2e2e" stroke-width="1">
<line x1="9.5" y1="149.5" x2="1535" y2="149.5"/>
<line x1="9.5" y1="149" x2="9.5" y2="163"/>
<line x1="1534.5" y1="149" x2="1534.5" y2="682"/>
<line x1="9.5" y1="681.5" x2="1535" y2="681.5"/>
<line x1="9.5" y1="669" x2="9.5" y2="682"/>
<line x1="1534.5" y1="714" x2="1534.5" y2="848"/>
<line x1="20.5" y1="150" x2="20.5" y2="156"/>
<line x1="36.5" y1="150" x2="36.5" y2="153"/>
<line x1="67.5" y1="150" x2="67.5" y2="153"/>
<line x1="83.5" y1="150" x2="83.5" y2="156"/>
<line x1="98.5" y1="150" x2="98.5" y2="153"/>
<line x1="114.5" y1="150" x2="114.5" y2="156"/>
<line x1="130.5" y1="150" x2="130.5" y2="153"/>
<line x1="145.5" y1="150" x2="145.5" y2="156"/>
<line x1="161.5" y1="150" x2="161.5" y2="153"/>
<line x1="192.5" y1="150" x2="192.5" y2="153"/>
<line x1="208.5" y1="150" x2="208.5" y2="156"/>
<line x1="224.5" y1="150" x2="224.5" y2="153"/>
<line x1="240.5" y1="150" x2="240.5" y2="156"/>
<line x1="255.5" y1="150" x2="255.5" y2="153"/>
<line x1="271.5" y1="150" x2="271.5" y2="156"/>
<line x1="287.5" y1="150" x2="287.5" y2="153"/>
<line x1="318.5" y1="150" x2="318.5" y2="153"/>
<line x1="334.5" y1="150" x2="334.5" y2="156"/>
<line x1="349.5" y1="150" x2="349.5" y2="153"/>
<line x1="365.5" y1="150" x2="365.5" y2="156"/>
<line x1="381.5" y1="150" x2="381.5" y2="153"/>
<line x1="396.5" y1="150" x2="396.5" y2="156"/>
<line x1="412.5" y1="150" x2="412.5" y2="153"/>
<line x1="443.5" y1="150" x2="443.5" y2="153"/>
<line x1="459.5" y1="150" x2="459.5" y2="156"/>
<line x1="475.5" y1="150" x2="475.5" y2="153"/>
<line x1="490.5" y1="150" x2="490.5" y2="156"/>
<line x1="506.5" y1="150" x2="506.5" y2="153"/>
<line x1="522.5" y1="150" x2="522.5" y2="156"/>
<line x1="537.5" y1="150" x2="537.5" y2="153"/>
<line x1="569.5" y1="150" x2="569.5" y2="153"/>
<line x1="585.5" y1="150" x2="585.5" y2="156"/>
<line x1="600.5" y1="150" x2="600.5" y2="153"/>
<line x1="616.5" y1="150" x2="616.5" y2="156"/>
<line x1="632.5" y1="150" x2="632.5" y2="153"/>
<line x1="647.5" y1="150" x2="647.5" y2="156"/>
<line x1="663.5" y1="150" x2="663.5" y2="153"/>
<line x1="694.5" y1="150" x2="694.5" y2="153"/>
<line x1="710.5" y1="150" x2="710.5" y2="156"/>
<line x1="726.5" y1="150" x2="726.5" y2="153"/>
<line x1="741.5" y1="150" x2="741.5" y2="156"/>
<line x1="757.5" y1="150" x2="757.5" y2="153"/>
<line x1="773.5" y1="150" x2="773.5" y2="156"/>
<line x1="788.5" y1="150" x2="788.5" y2="153"/>
<line x1="820.5" y1="150" x2="820.5" y2="153"/>
<line x1="835.5" y1="150" x2="835.5" y2="156"/>
<line x1="851.5" y1="150" x2="851.5" y2="153"/>
<line x1="867.5" y1="150" x2="867.5" y2="156"/>
<line x1="882.5" y1="150" x2="882.5" y2="153"/>
<line x1="898.5" y1="150" x2="898.5" y2="156"/>
<line x1="914.5" y1="150" x2="914.5" y2="153"/>
<line x1="945.5" y1="150" x2="945.5" y2="153"/>
<line x1="961.5" y1="150" x2="961.5" y2="156"/>
<line x1="977.5" y1="150" x2="977.5" y2="153"/>
<line x1="992.5" y1="150" x2="992.5" y2="156"/>
<line x1="1008.5" y1="150" x2="1008.5" y2="153"/>
<line x1="1024.5" y1="150" x2="1024.5" y2="156"/>
<line x1="1039.5" y1="150" x2="1039.5" y2="153"/>
<line x1="1071.5" y1="150" x2="1071.5" y2="153"/>
<line x1="1086.5" y1="150" x2="1086.5" y2="156"/>
<line x1="1102.5" y1="150" x2="1102.5" y2="153"/>
<line x1="1118.5" y1="150" x2="1118.5" y2="156"/>
<line x1="1133.5" y1="150" x2="1133.5" y2="153"/>
<line x1="1149.5" y1="150" x2="1149.5" y2="156"/>
<line x1="1165.5" y1="150" x2="1165.5" y2="153"/>
<line x1="1196.5" y1="150" x2="1196.5" y2="153"/>
<line x1="1212.5" y1="150" x2="1212.5" y2="156"/>
<line x1="1227.5" y1="150" x2="1227.5" y2="153"/>
<line x1="1243.5" y1="150" x2="1243.5" y2="156"/>
<line x1="1259.5" y1="150" x2="1259.5" y2="153"/>
<line x1="1275.5" y1="150" x2="1275.5" y2="156"/>
<line x1="1290.5" y1="150" x2="1290.5" y2="153"/>
<line x1="1322.5" y1="150" x2="1322.5" y2="153"/>
<line x1="1337.5" y1="150" x2="1337.5" y2="156"/>
<line x1="1353.5" y1="150" x2="1353.5" y2="153"/>
<line x1="1369.5" y1="150" x2="1369.5" y2="156"/>
<line x1="1384.5" y1="150" x2="1384.5" y2="153"/>
<line x1="1400.5" y1="150" x2="1400.5" y2="156"/>
<line x1="1416.5" y1="150" x2="1416.5" y2="153"/>
<line x1="1447.5" y1="150" x2="1447.5" y2="153"/>
<line x1="1463.5" y1="150" x2="1463.5" y2="156"/>
<line x1="1478.5" y1="150" x2="1478.5" y2="153"/>
<line x1="1494.5" y1="150" x2="1494.5" y2="156"/>
<line x1="1510.5" y1="150" x2="1510.5" y2="153"/>
<line x1="1525.5" y1="150" x2="1525.5" y2="156"/>
<line x1="11.5" y1="675" x2="11.5" y2="681"/>
<line x1="26.5" y1="677" x2="26.5" y2="681"/>
<line x1="41.5" y1="669" x2="41.5" y2="681"/>
<line x1="55.5" y1="677" x2="55.5" y2="681"/>
<line x1="69.5" y1="675" x2="69.5" y2="681"/>
<line x1="83.5" y1="677" x2="83.5" y2="681"/>
<line x1="98.5" y1="675" x2="98.5" y2="681"/>
<line x1="112.5" y1="677" x2="112.5" y2="681"/>
<line x1="126.5" y1="675" x2="126.5" y2="681"/>
<line x1="141.5" y1="677" x2="141.5" y2="681"/>
<line x1="156.5" y1="669" x2="156.5" y2="681"/>
<line x1="170.5" y1="677" x2="170.5" y2="681"/>
<line x1="184.5" y1="675" x2="184.5" y2="681"/>
<line x1="198.5" y1="677" x2="198.5" y2="681"/>
<line x1="213.5" y1="675" x2="213.5" y2="681"/>
<line x1="227.5" y1="677" x2="227.5" y2="681"/>
<line x1="241.5" y1="675" x2="241.5" y2="681"/>
<line x1="256.5" y1="677" x2="256.5" y2="681"/>
<line x1="271.5" y1="669" x2="271.5" y2="681"/>
<line x1="285.5" y1="677" x2="285.5" y2="681"/>
<line x1="299.5" y1="675" x2="299.5" y2="681"/>
<line x1="313.5" y1="677" x2="313.5" y2="681"/>
<line x1="328.5" y1="675" x2="328.5" y2="681"/>
<line x1="342.5" y1="677" x2="342.5" y2="681"/>
<line x1="356.5" y1="675" x2="356.5" y2="681"/>
<line x1="371.5" y1="677" x2="371.5" y2="681"/>
<line x1="386.5" y1="669" x2="386.5" y2="681"/>
<line x1="400.5" y1="677" x2="400.5" y2="681"/>
<line x1="414.5" y1="675" x2="414.5" y2="681"/>
<line x1="428.5" y1="677" x2="428.5" y2="681"/>
<line x1="443.5" y1="675" x2="443.5" y2="681"/>
<line x1="457.5" y1="677" x2="457.5" y2="681"/>
<line x1="471.5" y1="675" x2="471.5" y2="681"/>
<line x1="486.5" y1="677" x2="486.5" y2="681"/>
<line x1="501.5" y1="669" x2="501.5" y2="681"/>
<line x1="515.5" y1="677" x2="515.5" y2="681"/>
<line x1="529.5" y1="675" x2="529.5" y2="681"/>
<line x1="543.5" y1="677" x2="543.5" y2="681"/>
<line x1="558.5" y1="675" x2="558.5" y2="681"/>
<line x1="572.5" y1="677" x2="572.5" y2="681"/>
<line x1="586.5" y1="675" x2="586.5" y2="681"/>
<line x1="601.5" y1="677" x2="601.5" y2="681"/>
<line x1="616.5" y1="669" x2="616.5" y2="681"/>
<line x1="630.5" y1="677" x2="630.5" y2="681"/>
<line x1="644.5" y1="675" x2="644.5" y2="681"/>
<line x1="658.5" y1="677" x2="658.5" y2="681"/>
<line x1="673.5" y1="675" x2="673.5" y2="681"/>
<line x1="687.5" y1="677" x2="687.5" y2="681"/>
<line x1="701.5" y1="675" x2="701.5" y2="681"/>
<line x1="716.5" y1="677" x2="716.5" y2="681"/>
<line x1="731.5" y1="669" x2="731.5" y2="681"/>
<line x1="745.5" y1="677" x2="745.5" y2="681"/>
<line x1="759.5" y1="675" x2="759.5" y2="681"/>
<line x1="773.5" y1="677" x2="773.5" y2="681"/>
<line x1="788.5" y1="675" x2="788.5" y2="681"/>
<line x1="802.5" y1="677" x2="802.5" y2="681"/>
<line x1="816.5" y1="675" x2="816.5" y2="681"/>
<line x1="831.5" y1="677" x2="831.5" y2="681"/>
<line x1="846.5" y1="669" x2="846.5" y2="681"/>
<line x1="860.5" y1="677" x2="860.5" y2="681"/>
<line x1="874.5" y1="675" x2="874.5" y2="681"/>
<line x1="888.5" y1="677" x2="888.5" y2="681"/>
<line x1="903.5" y1="675" x2="903.5" y2="681"/>
<line x1="917.5" y1="677" x2="917.5" y2="681"/>
<line x1="931.5" y1="675" x2="931.5" y2="681"/>
<line x1="946.5" y1="677" x2="946.5" y2="681"/>
<line x1="961.5" y1="669" x2="961.5" y2="681"/>
<line x1="975.5" y1="677" x2="975.5" y2="681"/>
<line x1="989.5" y1="675" x2="989.5" y2="681"/>
<line x1="1003.5" y1="677" x2="1003.5" y2="681"/>
<line x1="1018.5" y1="675" x2="1018.5" y2="681"/>
<line x1="1032.5" y1="677" x2="1032.5" y2="681"/>
<line x1="1046.5" y1="675" x2="1046.5" y2="681"/>
<line x1="1061.5" y1="677" x2="1061.5" y2="681"/>
<line x1="1076.5" y1="669" x2="1076.5" y2="681"/>
<line x1="1090.5" y1="677" x2="1090.5" y2="681"/>
<line x1="1104.5" y1="675" x2="1104.5" y2="681"/>
<line x1="1118.5" y1="677" x2="1118.5" y2="681"/>
<line x1="1133.5" y1="675" x2="1133.5" y2="681"/>
<line x1="1147.5" y1="677" x2="1147.5" y2="681"/>
<line x1="1161.5" y1="675" x2="1161.5" y2="681"/>
<line x1="1176.5" y1="677" x2="1176.5" y2="681"/>
<line x1="1191.5" y1="669" x2="1191.5" y2="681"/>
<line x1="1205.5" y1="677" x2="1205.5" y2="681"/>
<line x1="1219.5" y1="675" x2="1219.5" y2="681"/>
<line x1="1233.5" y1="677" x2="1233.5" y2="681"/>
<line x1="1248.5" y1="675" x2="1248.5" y2="681"/>
<line x1="1262.5" y1="677" x2="1262.5" y2="681"/>
<line x1="1276.5" y1="675" x2="1276.5" y2="681"/>
<line x1="1291.5" y1="677" x2="1291.5" y2="681"/>
<line x1="1306.5" y1="669" x2="1306.5" y2="681"/>
<line x1="1320.5" y1="677" x2="1320.5" y2="681"/>
<line x1="1334.5" y1="675" x2="1334.5" y2="681"/>
<line x1="1348.5" y1="677" x2="1348.5" y2="681"/>
<line x1="1363.5" y1="675" x2="1363.5" y2="681"/>
<line x1="1377.5" y1="677" x2="1377.5" y2="681"/>
<line x1="1391.5" y1="675" x2="1391.5" y2="681"/>
<line x1="1406.5" y1="677" x2="1406.5" y2="681"/>
<line x1="1421.5" y1="669" x2="1421.5" y2="681"/>
<line x1="1435.5" y1="677" x2="1435.5" y2="681"/>
<line x1="1449.5" y1="675" x2="1449.5" y2="681"/>
<line x1="1463.5" y1="677" x2="1463.5" y2="681"/>
<line x1="1478.5" y1="675" x2="1478.5" y2="681"/>
<line x1="1492.5" y1="677" x2="1492.5" y2="681"/>
<line x1="1506.5" y1="675" x2="1506.5" y2="681"/>
<line x1="1521.5" y1="677" x2="1521.5" y2="681"/>
<line x1="1530" y1="168.5" x2="1534" y2="168.5"/>
<line x1="1530" y1="178.5" x2="1534" y2="178.5"/>
<line x1="1530" y1="187.5" x2="1534" y2="187.5"/>
<line x1="1520" y1="196.5" x2="1534" y2="196.5"/>
<line x1="1530" y1="206.5" x2="1534" y2="206.5"/>
<line x1="1530" y1="216.5" x2="1534" y2="216.5"/>
<line x1="1530" y1="225.5" x2="1534" y2="225.5"/>
<line x1="1530" y1="234.5" x2="1534" y2="234.5"/>
<line x1="1527" y1="244.5" x2="1534" y2="244.5"/>
<line x1="1530" y1="254.5" x2="1534" y2="254.5"/>
<line x1="1530" y1="263.5" x2="1534" y2="263.5"/>
<line x1="1530" y1="272.5" x2="1534" y2="272.5"/>
<line x1="1530" y1="282.5" x2="1534" y2="282.5"/>
<line x1="1520" y1="292.5" x2="1534" y2="292.5"/>
<line x1="1530" y1="301.5" x2="1534" y2="301.5"/>
<line x1="1530" y1="310.5" x2="1534" y2="310.5"/>
<line x1="1530" y1="320.5" x2="1534" y2="320.5"/>
<line x1="1530" y1="330.5" x2="1534" y2="330.5"/>
<line x1="1527" y1="339.5" x2="1534" y2="339.5"/>
<line x1="1530" y1="348.5" x2="1534" y2="348.5"/>
<line x1="1530" y1="358.5" x2="1534" y2="358.5"/>
<line x1="1530" y1="368.5" x2="1534" y2="368.5"/>
<line x1="1530" y1="377.5" x2="1534" y2="377.5"/>
<line x1="1520" y1="386.5" x2="1534" y2="386.5"/>
<line x1="1530" y1="396.5" x2="1534" y2="396.5"/>
<line x1="1530" y1="406.5" x2="1534" y2="406.5"/>
<line x1="1530" y1="415.5" x2="1534" y2="415.5"/>
<line x1="1530" y1="424.5" x2="1534" y2="424.5"/>
<line x1="1527" y1="434.5" x2="1534" y2="434.5"/>
<line x1="1530" y1="444.5" x2="1534" y2="444.5"/>
<line x1="1530" y1="453.5" x2="1534" y2="453.5"/>
<line x1="1530" y1="462.5" x2="1534" y2="462.5"/>
<line x1="1530" y1="472.5" x2="1534" y2="472.5"/>
<line x1="1520" y1="482.5" x2="1534" y2="482.5"/>
<line x1="1530" y1="491.5" x2="1534" y2="491.5"/>
<line x1="1530" y1="500.5" x2="1534" y2="500.5"/>
<line x1="1530" y1="510.5" x2="1534" y2="510.5"/>
<line x1="1530" y1="520.5" x2="1534" y2="520.5"/>
<line x1="1527" y1="529.5" x2="1534" y2="529.5"/>
<line x1="1530" y1="538.5" x2="1534" y2="538.5"/>
<line x1="1530" y1="548.5" x2="1534" y2="548.5"/>
<line x1="1530" y1="558.5" x2="1534" y2="558.5"/>
<line x1="1530" y1="567.5" x2="1534" y2="567.5"/>
<line x1="1520" y1="576.5" x2="1534" y2="576.5"/>
<line x1="1530" y1="586.5" x2="1534" y2="586.5"/>
<line x1="1530" y1="596.5" x2="1534" y2="596.5"/>
<line x1="1530" y1="605.5" x2="1534" y2="605.5"/>
<line x1="1530" y1="614.5" x2="1534" y2="614.5"/>
<line x1="1527" y1="624.5" x2="1534" y2="624.5"/>
<line x1="1530" y1="634.5" x2="1534" y2="634.5"/>
<line x1="1530" y1="643.5" x2="1534" y2="643.5"/>
<line x1="1530" y1="652.5" x2="1534" y2="652.5"/>
<line x1="1530" y1="662.5" x2="1534" y2="662.5"/>
<line x1="1530" y1="720.5" x2="1534" y2="720.5"/>
<line x1="1527" y1="728.5" x2="1534" y2="728.5"/>
<line x1="1530" y1="737.5" x2="1534" y2="737.5"/>
<line x1="1530" y1="745.5" x2="1534" y2="745.5"/>
<line x1="1530" y1="754.5" x2="1534" y2="754.5"/>
<line x1="1530" y1="762.5" x2="1534" y2="762.5"/>
<line x1="1520" y1="771.5" x2="1534" y2="771.5"/>
<line x1="1530" y1="779.5" x2="1534" y2="779.5"/>
<line x1="1530" y1="788.5" x2="1534" y2="788.5"/>
<line x1="1530" y1="796.5" x2="1534" y2="796.5"/>
<line x1="1530" y1="805.5" x2="1534" y2="805.5"/>
<line x1="1527" y1="813.5" x2="1534" y2="813.5"/>
<line x1="1530" y1="822.5" x2="1534" y2="822.5"/>
<line x1="1530" y1="830.5" x2="1534" y2="830.5"/>
<line x1="1530" y1="839.5" x2="1534" y2="839.5"/>
<line x1="1530" y1="847.5" x2="1534" y2="847.5"/>
</g>
<polygon points="47.02,150 56.62,150 51.82,161" fill="#f7a21b"/>
<line x1="51.82" y1="150" x2="51.82" y2="157" stroke="#5a4a20" stroke-width="1"/>
<line x1="51.82" y1="161" x2="51.82" y2="164" stroke="#a8b8d0" stroke-width="1"/>
<polygon points="172.47,150 182.07,150 177.27,161" fill="#f7a21b"/>
<line x1="177.27" y1="150" x2="177.27" y2="157" stroke="#5a4a20" stroke-width="1"/>
<line x1="177.27" y1="161" x2="177.27" y2="164" stroke="#a8b8d0" stroke-width="1"/>
<polygon points="297.93,150 307.53,150 302.73,161" fill="#f7a21b"/>
<line x1="302.73" y1="150" x2="302.73" y2="157" stroke="#5a4a20" stroke-width="1"/>
<line x1="302.73" y1="161" x2="302.73" y2="164" stroke="#a8b8d0" stroke-width="1"/>
<polygon points="423.38,150 432.98,150 428.18,161" fill="#f7a21b"/>
<line x1="428.18" y1="150" x2="428.18" y2="157" stroke="#5a4a20" stroke-width="1"/>
<line x1="428.18" y1="161" x2="428.18" y2="164" stroke="#a8b8d0" stroke-width="1"/>
<polygon points="548.84,150 558.44,150 553.64,161" fill="#f7a21b"/>
<line x1="553.64" y1="150" x2="553.64" y2="157" stroke="#5a4a20" stroke-width="1"/>
<line x1="553.64" y1="161" x2="553.64" y2="164" stroke="#a8b8d0" stroke-width="1"/>
<polygon points="674.29,150 683.89,150 679.09,161" fill="#f7a21b"/>
<line x1="679.09" y1="150" x2="679.09" y2="157" stroke="#5a4a20" stroke-width="1"/>
<line x1="679.09" y1="161" x2="679.09" y2="164" stroke="#a8b8d0" stroke-width="1"/>
<polygon points="799.75,150 809.35,150 804.55,161" fill="#f7a21b"/>
<line x1="804.55" y1="150" x2="804.55" y2="157" stroke="#5a4a20" stroke-width="1"/>
<line x1="804.55" y1="161" x2="804.55" y2="164" stroke="#a8b8d0" stroke-width="1"/>
<polygon points="925.2,150 934.8,150 930,161" fill="#f7a21b"/>
<line x1="930" y1="150" x2="930" y2="157" stroke="#5a4a20" stroke-width="1"/>
<line x1="930" y1="161" x2="930" y2="164" stroke="#a8b8d0" stroke-width="1"/>
<polygon points="1050.65,150 1060.25,150 1055.45,161" fill="#f7a21b"/>
<line x1="1055.45" y1="150" x2="1055.45" y2="157" stroke="#5a4a20" stroke-width="1"/>
<line x1="1055.45" y1="161" x2="1055.45" y2="164" stroke="#a8b8d0" stroke-width="1"/>
<polygon points="1176.11,150 1185.71,150 1180.91,161" fill="#f7a21b"/>
<line x1="1180.91" y1="150" x2="1180.91" y2="157" stroke="#5a4a20" stroke-width="1"/>
<line x1="1180.91" y1="161" x2="1180.91" y2="164" stroke="#a8b8d0" stroke-width="1"/>
<polygon points="1301.56,150 1311.16,150 1306.36,161" fill="#f7a21b"/>
<line x1="1306.36" y1="150" x2="1306.36" y2="157" stroke="#5a4a20" stroke-width="1"/>
<line x1="1306.36" y1="161" x2="1306.36" y2="164" stroke="#a8b8d0" stroke-width="1"/>
<polygon points="1427.02,150 1436.62,150 1431.82,161" fill="#f7a21b"/>
<line x1="1431.82" y1="150" x2="1431.82" y2="157" stroke="#5a4a20" stroke-width="1"/>
<line x1="1431.82" y1="161" x2="1431.82" y2="164" stroke="#a8b8d0" stroke-width="1"/>
<text x="51.02" y="143.8" font-size="11" fill="#30306c" text-anchor="middle" textLength="32.5" lengthAdjust="spacingAndGlyphs">02:00</text>
<text x="176.47" y="143.8" font-size="11" fill="#30306c" text-anchor="middle" textLength="32.5" lengthAdjust="spacingAndGlyphs">03:00</text>
<text x="301.93" y="143.8" font-size="11" fill="#30306c" text-anchor="middle" textLength="32.5" lengthAdjust="spacingAndGlyphs">04:00</text>
<text x="427.38" y="143.8" font-size="11" fill="#30306c" text-anchor="middle" textLength="32.5" lengthAdjust="spacingAndGlyphs">05:00</text>
<text x="552.84" y="143.8" font-size="11" fill="#30306c" text-anchor="middle" textLength="32.5" lengthAdjust="spacingAndGlyphs">06:00</text>
<text x="678.29" y="143.8" font-size="11" fill="#30306c" text-anchor="middle" textLength="32.5" lengthAdjust="spacingAndGlyphs">07:00</text>
<text x="803.75" y="143.8" font-size="11" fill="#30306c" text-anchor="middle" textLength="32.5" lengthAdjust="spacingAndGlyphs">08:00</text>
<text x="929.2" y="143.8" font-size="11" fill="#30306c" text-anchor="middle" textLength="32.5" lengthAdjust="spacingAndGlyphs">09:00</text>
<text x="1054.65" y="143.8" font-size="11" fill="#30306c" text-anchor="middle" textLength="32.5" lengthAdjust="spacingAndGlyphs">10:00</text>
<text x="1180.11" y="143.8" font-size="11" fill="#30306c" text-anchor="middle" textLength="32.5" lengthAdjust="spacingAndGlyphs">11:00</text>
<text x="1305.56" y="143.8" font-size="11" fill="#30306c" text-anchor="middle" textLength="32.5" lengthAdjust="spacingAndGlyphs">12:00</text>
<text x="1431.02" y="143.8" font-size="11" fill="#30306c" text-anchor="middle" textLength="32.5" lengthAdjust="spacingAndGlyphs">13:00</text>
<text x="9.2" y="699.2" font-size="11" fill="#30306c" textLength="102.6" lengthAdjust="spacingAndGlyphs">28/05/2018 01:40</text>
<text x="155.65" y="699.2" font-size="11" fill="#30306c" text-anchor="middle" textLength="32.3" lengthAdjust="spacingAndGlyphs">02:50</text>
<text x="270.65" y="699.2" font-size="11" fill="#30306c" text-anchor="middle" textLength="32.3" lengthAdjust="spacingAndGlyphs">03:45</text>
<text x="385.65" y="699.2" font-size="11" fill="#30306c" text-anchor="middle" textLength="32.3" lengthAdjust="spacingAndGlyphs">04:40</text>
<text x="500.65" y="699.2" font-size="11" fill="#30306c" text-anchor="middle" textLength="32.3" lengthAdjust="spacingAndGlyphs">05:35</text>
<text x="615.65" y="699.2" font-size="11" fill="#30306c" text-anchor="middle" textLength="32.3" lengthAdjust="spacingAndGlyphs">06:30</text>
<text x="730.65" y="699.2" font-size="11" fill="#30306c" text-anchor="middle" textLength="32.3" lengthAdjust="spacingAndGlyphs">07:25</text>
<text x="845.65" y="699.2" font-size="11" fill="#30306c" text-anchor="middle" textLength="32.3" lengthAdjust="spacingAndGlyphs">08:20</text>
<text x="960.65" y="699.2" font-size="11" fill="#30306c" text-anchor="middle" textLength="32.3" lengthAdjust="spacingAndGlyphs">09:15</text>
<text x="1075.65" y="699.2" font-size="11" fill="#30306c" text-anchor="middle" textLength="32.3" lengthAdjust="spacingAndGlyphs">10:10</text>
<text x="1190.65" y="699.2" font-size="11" fill="#30306c" text-anchor="middle" textLength="32.3" lengthAdjust="spacingAndGlyphs">11:05</text>
<text x="1305.65" y="699.2" font-size="11" fill="#30306c" text-anchor="middle" textLength="32.3" lengthAdjust="spacingAndGlyphs">12:00</text>
<text x="1420.65" y="699.2" font-size="11" fill="#30306c" text-anchor="middle" textLength="32.3" lengthAdjust="spacingAndGlyphs">12:55</text>
<rect x="375" y="686" width="106" height="16" fill="#ff9a00"/>
<text x="377" y="699.2" font-size="11" fill="#111" textLength="101.75" lengthAdjust="spacingAndGlyphs">28/05/2018 05:00</text>
<text x="1537.8" y="200.9" font-size="11" fill="#30306c" textLength="37.8" lengthAdjust="spacingAndGlyphs">1,1725</text>
<text x="1537.8" y="295.9" font-size="11" fill="#30306c" textLength="37.8" lengthAdjust="spacingAndGlyphs">1,1700</text>
<text x="1537.8" y="390.9" font-size="11" fill="#30306c" textLength="37.8" lengthAdjust="spacingAndGlyphs">1,1675</text>
<text x="1537.8" y="485.9" font-size="11" fill="#30306c" textLength="37.8" lengthAdjust="spacingAndGlyphs">1,1650</text>
<text x="1537.8" y="580.9" font-size="11" fill="#30306c" textLength="37.8" lengthAdjust="spacingAndGlyphs">1,1625</text>
<text x="1537.9" y="775.5" font-size="11" fill="#30306c" textLength="30.6" lengthAdjust="spacingAndGlyphs">2 500</text>
<rect x="1535" y="212" width="48" height="16" fill="#8a90b8"/>
<rect x="1535" y="402" width="48" height="16" fill="#ff9a00"/>
<rect x="1535" y="597" width="48" height="16" fill="#5cc8fa"/>
<text x="1536.7" y="224" font-size="11" fill="#000" textLength="45" lengthAdjust="spacingAndGlyphs">1,17187</text>
<text x="1536.7" y="414" font-size="11" fill="#000" textLength="45" lengthAdjust="spacingAndGlyphs">1,16687</text>
<text x="1536.7" y="609" font-size="11" fill="#000" textLength="45" lengthAdjust="spacingAndGlyphs">1,16173</text>
<text x="17.5" y="725.5" font-size="11" fill="#2f8ef0" textLength="190.2" lengthAdjust="spacingAndGlyphs">EUR/USD - Volume du tick: 1 278</text>
<rect x="18" y="168" width="234" height="30" fill="rgba(226,226,232,0.82)"/>
<text x="19.75" y="188.75" font-size="14.8" fill="#3b3b8c" textLength="9" lengthAdjust="spacingAndGlyphs">S</text>
<text x="36.25" y="190.6" font-size="12.8" fill="#111" font-weight="bold" textLength="23.5" lengthAdjust="spacingAndGlyphs">1,16</text>
<text x="68.5" y="190.6" font-size="23.5" fill="#000" font-weight="bold" textLength="24" lengthAdjust="spacingAndGlyphs">17</text>
<text x="97.75" y="182.5" font-size="11.2" fill="#111" font-weight="bold" textLength="5.75" lengthAdjust="spacingAndGlyphs">3</text>
<rect x="110.5" y="174.5" width="48" height="17" fill="#fff" stroke="#dedee6"/>
<text x="113" y="188" font-size="11" fill="#c8c8d8">1</text>
<polygon points="150,182 156,182 153,185" fill="#ccccd8"/>
<text x="165" y="190.6" font-size="12.8" fill="#111" font-weight="bold" textLength="23.75" lengthAdjust="spacingAndGlyphs">1,16</text>
<text x="197.5" y="191.2" font-size="23.5" fill="#000" font-weight="bold" textLength="22.5" lengthAdjust="spacingAndGlyphs">18</text>
<text x="226.5" y="182.5" font-size="11.2" fill="#111" font-weight="bold" textLength="6" lengthAdjust="spacingAndGlyphs">5</text>
<text x="240.6" y="188.75" font-size="13.8" fill="#3b3b8c" textLength="9.4" lengthAdjust="spacingAndGlyphs">B</text>
<rect x="9" y="707" width="1584" height="4" fill="#c5d0dc"/>
<rect x="9" y="712" width="1584" height="1" fill="#e6ebf0"/>
</svg>
<div id="tb" class="a"></div>
<svg class="a" style="left:0;top:0" width="1200" height="130">
<defs><linearGradient id="gOr" x1="0" y1="0" x2="0" y2="1"><stop offset="0" stop-color="#ffbd80"/><stop offset="0.5" stop-color="#fbae68"/><stop offset="0.52" stop-color="#f79e4e"/><stop offset="1" stop-color="#f5a458"/></linearGradient><radialGradient id="gLens" cx="0.4" cy="0.35" r="0.7"><stop offset="0" stop-color="#ffffff"/><stop offset="1" stop-color="#b8b8c0"/></radialGradient><radialGradient id="gRadar" cx="0.45" cy="0.4" r="0.6"><stop offset="0" stop-color="#8fd0f8"/><stop offset="1" stop-color="#2a86d0"/></radialGradient></defs>
<line x1="14.5" y1="104" x2="14.5" y2="114" stroke="#c4c6d2" stroke-width="1"/>
<line x1="16.5" y1="104" x2="16.5" y2="114" stroke="#c4c6d2" stroke-width="1"/>
<line x1="18.5" y1="104" x2="18.5" y2="114" stroke="#c4c6d2" stroke-width="1"/>
<rect x="22" y="93" width="1" height="32" fill="#d4d6e0"/><rect x="23" y="93" width="1" height="32" fill="#ffffff"/>
<rect x="27" y="99" width="81" height="21" fill="#fff"/>
<rect x="94" y="101" width="13" height="17" fill="#ececf1"/>
<polygon points="96.5,108.5 104.5,108.5 100.5,112.5" fill="#000"/>
<text x="30" y="114" font-size="12" fill="#111" textLength="47" lengthAdjust="spacingAndGlyphs">EUR/USD</text>
<rect x="160" y="99.5" width="85" height="20" fill="#fff"/>
<rect x="230.5" y="101" width="13" height="17" fill="#ececf1"/>
<polygon points="233.5,108.5 241.5,108.5 237.5,112.5" fill="#000"/>
<text x="163.5" y="113.5" font-size="12" fill="#111" textLength="16.5" lengthAdjust="spacingAndGlyphs">m5</text>
<g fill="#dfe6f0" stroke="#2c4a78" stroke-width="1.6"><rect x="122.5" y="104.5" width="8" height="6" rx="3"/><rect x="127.5" y="104.5" width="8" height="6" rx="3"/></g>
<line x1="125" y1="107.5" x2="133" y2="107.5" stroke="#2c4a78" stroke-width="1.2"/>
<g stroke="#e81818" stroke-width="1.8"><line x1="130" y1="109" x2="136" y2="115.5"/><line x1="136" y1="109" x2="130" y2="115.5"/></g>
<rect x="122.5" y="114" width="13" height="2" fill="#d8dae4" opacity="0.6"/>
<polygon points="148.5,108 154.5,108 151.5,111" fill="#9094ac"/>
<rect x="251" y="93" width="1" height="32" fill="#d4d6e0"/><rect x="252" y="93" width="1" height="32" fill="#ffffff"/>
<rect x="264.5" y="102.5" width="14" height="12" fill="#fff" stroke="#3a62c0" stroke-width="1"/>
<rect x="265" y="103" width="13" height="2.5" fill="#8fb0e8"/>
<polyline points="266,111 268.5,108.5 270.5,110.5 273,107.5 275.5,110 277.5,108.5" fill="none" stroke="#d82020" stroke-width="1.2"/>
<polyline points="271,109.5 273,107.5 275.5,110 277.5,109" fill="none" stroke="#208a20" stroke-width="1.2"/>
<polygon points="291.5,108 297.5,108 294.5,111" fill="#9094ac"/>
<rect x="303" y="93" width="1" height="32" fill="#d4d6e0"/><rect x="304" y="93" width="1" height="32" fill="#ffffff"/>
<rect x="307.5" y="94.5" width="32" height="30" fill="url(#gOr)" stroke="#d2944a" stroke-width="1"/>
<text x="315" y="112" font-size="11.5" font-family="Liberation Mono" fill="#111" textLength="17" lengthAdjust="spacingAndGlyphs">Bid</text>
<rect x="314" y="114" width="15" height="2" fill="#1e78e0"/>
<text x="350.5" y="112" font-size="11.5" font-family="Liberation Mono" fill="#111" textLength="17" lengthAdjust="spacingAndGlyphs">Ask</text>
<rect x="351" y="114" width="16" height="2" fill="#ee5430"/>
<rect x="379" y="93" width="1" height="32" fill="#d4d6e0"/><rect x="380" y="93" width="1" height="32" fill="#ffffff"/>
<line x1="401.0" y1="108" x2="407.0" y2="114" stroke="#1a1a1a" stroke-width="2"/>
<circle cx="397.5" cy="104.5" r="5" fill="url(#gLens)" stroke="#b0b0b8" stroke-width="1"/>
<circle cx="396.0" cy="111.5" r="3.3" fill="#0c3ea8"/>
<line x1="394.2" y1="111.5" x2="397.8" y2="111.5" stroke="#fff" stroke-width="1.2"/>
<line x1="396.0" y1="109.7" x2="396.0" y2="113.3" stroke="#fff" stroke-width="1.2"/>
<rect x="392.5" y="116" width="10" height="2" fill="#c0c8e0" opacity="0.5"/>
<line x1="436.0" y1="108" x2="442.0" y2="114" stroke="#1a1a1a" stroke-width="2"/>
<circle cx="432.5" cy="104.5" r="5" fill="url(#gLens)" stroke="#b0b0b8" stroke-width="1"/>
<circle cx="431.0" cy="111.5" r="3.3" fill="#0c3ea8"/>
<line x1="429.2" y1="111.5" x2="432.8" y2="111.5" stroke="#fff" stroke-width="1.2"/>
<rect x="427.5" y="116" width="10" height="2" fill="#c0c8e0" opacity="0.5"/>
<polygon points="466.5,99.5 466.5,112 469.5,109.5 472,114.5 474,113.5 471.5,108.5 475.5,108.5" fill="#f4f4f6" stroke="#8a8a90" stroke-width="0.9"/>
<circle cx="466" cy="111.5" r="3.3" fill="#0c3ea8"/><line x1="464.2" y1="111.5" x2="467.8" y2="111.5" stroke="#fff" stroke-width="1.2"/><line x1="466" y1="109.7" x2="466" y2="113.3" stroke="#fff" stroke-width="1.2"/>
<line x1="498.5" y1="105" x2="498.5" y2="117.5" stroke="#111" stroke-width="1"/>
<polygon points="496.5,107 500.5,107 498.5,104.5" fill="#111"/><polygon points="496.5,115.5 500.5,115.5 498.5,118" fill="#111"/>
<line x1="507" y1="113" x2="510.5" y2="116.5" stroke="#d05a10" stroke-width="2"/>
<circle cx="505" cy="110.5" r="3.3" fill="#cfeaf8" stroke="#222" stroke-width="1"/>
<polygon points="524.5,108 530.5,108 527.5,111" fill="#9094ac"/>
<rect x="534.5" y="94.5" width="32" height="30" fill="url(#gOr)" stroke="#d2944a" stroke-width="1"/>
<rect x="545.5" y="103.5" width="11" height="1.5" fill="#111"/><rect x="545.5" y="115.5" width="11" height="1.5" fill="#111"/>
<line x1="551" y1="106" x2="551" y2="114.5" stroke="#1c8a1c" stroke-width="2.2"/>
<polygon points="548,107.5 554,107.5 551,104.5" fill="#1c9a1c"/><polygon points="548,113 554,113 551,116" fill="#1c9a1c"/>
<rect x="578.5" y="100.5" width="14" height="12" fill="#fff" stroke="#3a62c0" stroke-width="1"/><rect x="579" y="101" width="13" height="2.5" fill="#8fb0e8"/>
<line x1="585.5" y1="113.5" x2="590" y2="108.5" stroke="#f0a020" stroke-width="2.2"/><circle cx="591" cy="107.5" r="2.8" fill="#f6b030"/>
<path d="M615,110 Q621.5,103 628.5,110 Q621.5,117 615,110 Z" fill="none" stroke="#a8a8ae" stroke-width="1.1"/><circle cx="621.5" cy="110" r="2.2" fill="#b4b4ba"/>
<path d="M617,104 Q622,99.5 628,102" fill="none" stroke="#8a8a90" stroke-width="1.1"/><polygon points="626,100 630,100.5 628,104" fill="#707078"/>
<circle cx="655.5" cy="108.3" r="7.3" fill="url(#gRadar)" stroke="#2a7ec0" stroke-width="0.8"/>
<circle cx="655.5" cy="108.3" r="4.5" fill="none" stroke="#bfe4fb" stroke-width="0.6"/><circle cx="655.5" cy="108.3" r="2" fill="none" stroke="#bfe4fb" stroke-width="0.6"/>
<path d="M655.5,108.3 L662,110 A7,7 0 0 1 659,114.5 Z" fill="#dff2fd"/>
<rect x="676" y="93" width="1" height="32" fill="#d4d6e0"/><rect x="677" y="93" width="1" height="32" fill="#ffffff"/>
<g transform="rotate(-34 696 109)"><rect x="686.5" y="106.5" width="19" height="5.5" fill="#f5d26a" stroke="#b89a38" stroke-width="0.8"/><line x1="690" y1="107" x2="690" y2="109" stroke="#705a10"/><line x1="694" y1="107" x2="694" y2="109" stroke="#705a10"/><line x1="698" y1="107" x2="698" y2="109" stroke="#705a10"/><line x1="702" y1="107" x2="702" y2="109" stroke="#705a10"/></g>
<polygon points="716.5,108 722.5,108 719.5,111" fill="#9094ac"/>
<rect x="728" y="93" width="1" height="32" fill="#d4d6e0"/><rect x="729" y="93" width="1" height="32" fill="#ffffff"/>
<rect x="741.5" y="102.5" width="14" height="12" fill="#fff" stroke="#3a62c0" stroke-width="1"/><rect x="742" y="103" width="13" height="2.2" fill="#8fb0e8"/>
<polygon points="742,114 746,108.5 749,111.5 752,107.5 755,114" fill="#1e8a2a"/>
<circle cx="743.5" cy="104.3" r="3.3" fill="#2aa040" stroke="#fff" stroke-width="0.6"/><line x1="741.5" y1="104.3" x2="745.5" y2="104.3" stroke="#fff" stroke-width="1.1"/><line x1="743.5" y1="102.3" x2="743.5" y2="106.3" stroke="#fff" stroke-width="1.1"/>
<rect x="775.5" y="102.5" width="13" height="11" fill="#e8f0fc" stroke="#4a78d0" stroke-width="1"/><rect x="776" y="103" width="12" height="2" fill="#8fb0e8"/>
<rect x="778.5" y="107.5" width="13" height="10" fill="none" stroke="#24407a" stroke-width="1.2"/>
<polyline points="777,111 779.5,109.5 782,111.5 785,109.5 788,111.5 791,110" fill="none" stroke="#222" stroke-width="0.8"/>
<g stroke="#1a1a1a" stroke-width="1.2" fill="none" stroke-linecap="round"><line x1="812.2" y1="115.4" x2="822.6" y2="105"/><line x1="814.3" y1="107.3" x2="820.5" y2="113.5"/><line x1="814.3" y1="107.3" x2="819.5" y2="101.8"/><line x1="820.5" y1="113.5" x2="825.8" y2="107.9"/></g>
<polygon points="838.5,108 844.5,108 841.5,111" fill="#9094ac"/>
<rect x="857" y="103" width="16" height="2.8" rx="1.2" fill="#3e4e62"/>
<circle cx="858.6" cy="104.4" r="0.7" fill="#fff"/><circle cx="871.4" cy="104.4" r="0.7" fill="#fff"/>
<rect x="857" y="108" width="16" height="2.8" rx="1.2" fill="#3e4e62"/>
<circle cx="858.6" cy="109.4" r="0.7" fill="#fff"/><circle cx="871.4" cy="109.4" r="0.7" fill="#fff"/>
<rect x="857" y="113" width="16" height="2.8" rx="1.2" fill="#3e4e62"/>
<circle cx="858.6" cy="114.4" r="0.7" fill="#fff"/><circle cx="871.4" cy="114.4" r="0.7" fill="#fff"/>
<rect x="869" y="112" width="5" height="5" fill="#fff"/><text x="869.2" y="116.8" font-size="6.5" font-weight="bold" fill="#000">F</text>
<polygon points="884.5,108 890.5,108 887.5,111" fill="#9094ac"/>
<g stroke="#222" stroke-width="0.9"><line x1="904" y1="115" x2="908.5" y2="103.5"/><line x1="904" y1="115" x2="913.5" y2="104"/><line x1="904" y1="115" x2="916.5" y2="109.5"/><line x1="904" y1="115" x2="915" y2="113"/></g><circle cx="904.2" cy="115" r="1.1" fill="#222"/>
<polygon points="930.5,108 936.5,108 933.5,111" fill="#9094ac"/>
<line x1="950" y1="115.5" x2="961.5" y2="104.2" stroke="#7ab81a" stroke-width="2"/><circle cx="950" cy="115.5" r="1.4" fill="#fff" stroke="#333" stroke-width="0.7"/><circle cx="961.5" cy="104.2" r="1.4" fill="#fff" stroke="#333" stroke-width="0.7"/>
<polygon points="976.5,108 982.5,108 979.5,111" fill="#9094ac"/>
<ellipse cx="1003" cy="110.3" rx="8" ry="6" fill="#d4e6f6" stroke="#8cb4da" stroke-width="0.9"/>
<polygon points="1022.5,108 1028.5,108 1025.5,111" fill="#9094ac"/>
<text x="1040.5" y="107.8" font-size="7.5" font-weight="bold" font-family="Liberation Mono" fill="#000" textLength="14.5" lengthAdjust="spacingAndGlyphs">ABC</text>
<circle cx="1051.7" cy="111.8" r="3.2" fill="#0c3ea8"/><line x1="1049.9" y1="111.8" x2="1053.5" y2="111.8" stroke="#fff" stroke-width="1.2"/><line x1="1051.7" y1="110" x2="1051.7" y2="113.6" stroke="#fff" stroke-width="1.2"/>
<rect x="1069" y="93" width="1" height="32" fill="#d4d6e0"/><rect x="1070" y="93" width="1" height="32" fill="#ffffff"/>
<g transform="rotate(-40 1090 109.5)"><rect x="1082" y="106" width="16" height="7.5" rx="2" fill="#ececf0" stroke="#a8a8b0" stroke-width="0.8"/><rect x="1091" y="106" width="7" height="7.5" rx="1.5" fill="#e4788a"/></g>
<rect x="1110" y="93" width="1" height="32" fill="#d4d6e0"/><rect x="1111" y="93" width="1" height="32" fill="#ffffff"/>
<rect x="1128" y="103.5" width="4.5" height="4" fill="#3a8ee8" stroke="#1a5ab0" stroke-width="0.6"/>
<g stroke="#5a8a10" stroke-width="1" fill="none"><line x1="1130.2" y1="107.5" x2="1130.2" y2="110"/><line x1="1125" y1="110" x2="1135.5" y2="110"/><line x1="1125" y1="110" x2="1125" y2="112"/><line x1="1135.5" y1="110" x2="1135.5" y2="112"/></g>
<rect x="1123" y="112" width="4.5" height="4.5" fill="#8cc83a" stroke="#4a7a10" stroke-width="0.7"/>
<rect x="1128.2" y="112" width="4.5" height="4.5" fill="#8cc83a" stroke="#4a7a10" stroke-width="0.7"/>
<rect x="1133.5" y="112" width="4.5" height="4.5" fill="#8cc83a" stroke="#4a7a10" stroke-width="0.7"/>
<rect x="1149" y="93" width="1" height="32" fill="#d4d6e0"/><rect x="1150" y="93" width="1" height="32" fill="#ffffff"/>
<g fill="#8a8ea6"><rect x="1155" y="105" width="7" height="1"/><rect x="1155" y="107" width="7" height="1"/><rect x="1155" y="109" width="7" height="1"/><rect x="1155" y="111" width="4" height="1"/><polygon points="1159,112 1165,112 1162,115"/></g>
</svg>
<div id="frameL" class="a"></div>
<div id="frameR" class="a"></div>
<div id="taskbar" class="a">
<svg class="a" style="left:0;top:0" width="1600" height="41">
<rect x="0" y="0" width="1600" height="8" fill="#262729"/>
<rect x="0" y="8" width="1600" height="33" fill="#090d11"/>
<rect x="295" y="0" width="44" height="41" fill="#3b3c3e"/><rect x="295" y="0" width="44" height="8" fill="#4a4b4d"/><rect x="339" y="0" width="4" height="41" fill="#2e2f31"/>
<rect x="250" y="39" width="40" height="2" fill="#f2b6ae"/><rect x="295" y="39" width="48" height="2" fill="#f2b6ae"/>
<polygon points="15.6,14.5 23.3,13.4 23.3,20.6 15.6,20.6" fill="#fff"/>
<polygon points="24.3,13.2 32.2,12 32.2,20.6 24.3,20.6" fill="#fff"/>
<polygon points="15.6,21.6 23.3,21.6 23.3,28.6 15.6,27.6" fill="#fff"/>
<polygon points="24.3,21.6 32.2,21.6 32.2,29.8 24.3,28.8" fill="#fff"/>
<rect x="66.5" y="14.5" width="11" height="13" fill="none" stroke="#fff" stroke-width="1.2"/>
<path d="M64.5,16 H62.5 V27 H64.5 M79.5,16 H81.5 V27 H79.5" fill="none" stroke="#fff" stroke-width="1.1"/>
<rect x="112.5" y="13.5" width="20.5" height="14.5" fill="#4fb0ea" stroke="#2a86c8" stroke-width="0.6"/>
<circle cx="119" cy="19" r="3.6" fill="#fff"/><path d="M119,19 L119,15.4 A3.6,3.6 0 0 1 122.6,19 Z" fill="#f7a81e"/>
<g fill="#fff"><rect x="125" y="16" width="6" height="1"/><rect x="125" y="18.5" width="6" height="1"/><rect x="125" y="21" width="6" height="1"/></g>
<rect x="115" y="24.5" width="15" height="1" fill="#f7c878"/>
<circle cx="171.9" cy="20.9" r="11.3" fill="#fdfdfd"/>
<rect x="165.1" y="14.1" width="13.6" height="13.8" rx="1" fill="#2a62ee"/>
<polygon points="165.1,14.1 178.7,14.1 168.5,21" fill="#80b4fa"/>
<polygon points="165.1,14.1 168.5,21 170.5,24.5 165.1,27.9" fill="#4a86f6"/>
<polygon points="174.5,20 178.7,20 178.7,27.9" fill="#0a34c4"/>
<polygon points="168.3,19.6 178.2,14.4 175.2,20 170.6,24.4" fill="#ffffff"/>
<path d="M210,13 H217 L219,14.5 H231.2 V29.8 H210 Z" fill="#f6d36e"/><rect x="210" y="16.5" width="21.2" height="13.3" fill="#f9dc86"/>
<path d="M214,30 V24.5 H227.5 V30 H224 V27.5 H217.5 V30 Z" fill="#2aa2ea"/>
<circle cx="269.9" cy="21" r="11.2" fill="#dd4b3a"/>
<path d="M269.9,21 L260.2,15.4 A11.2,11.2 0 0 0 264.3,30.7 Z" fill="#1e9e54"/>
<path d="M269.9,21 L264.3,30.7 A11.2,11.2 0 0 0 281.1,21 Z" fill="#f8c42a"/>
<circle cx="269.9" cy="21" r="5" fill="#fff"/><circle cx="269.9" cy="21" r="3.9" fill="#4a86e8"/>
<defs><linearGradient id="gApp" x1="0" y1="0" x2="1" y2="1"><stop offset="0" stop-color="#3a90e0"/><stop offset="1" stop-color="#1a4c9c"/></linearGradient></defs>
<rect x="308" y="9.8" width="21.3" height="19.2" fill="url(#gApp)"/>
<path d="M313.3,15.9 Q317,11.5 321,12.8 Q324.5,13.8 324.2,15.5 L320.5,19.8 L321.2,16 Z" fill="#fbfdff"/>
<path d="M317.8,18.2 L318.2,22.4 L324.6,22.3 Q323,26.2 318.7,26 Q314.5,25.8 313.7,23.3 Z" fill="#dfeaf6"/>
<g fill="none" stroke="#fff" stroke-width="1.1">
<circle cx="1377.8" cy="17.8" r="2.6"/><path d="M1373.5,27.5 Q1374,21.5 1377.8,21.5 Q1381.5,21.5 1382,27.5"/>
<circle cx="1384.5" cy="15" r="2.6"/><path d="M1381.5,20 Q1384.5,18.3 1388.5,22"/>
<polyline points="1411,23.5 1417,17.8 1423,23.5"/>
<path d="M1433.5,17.5 H1436.5 L1440.5,14 V28 L1436.5,24.5 H1433.5 Z"/><path d="M1443,18 Q1445,21 1443,24"/><path d="M1445.5,15.5 Q1449,21 1445.5,26.5"/>
<path d="M1460,27.5 Q1460.5,17 1472.5,15.5"/><path d="M1463,28 Q1463.5,20 1472.5,19"/><path d="M1466,28.3 Q1466.5,23 1472.5,22.5"/>
</g><circle cx="1471" cy="27" r="1.3" fill="#fff"/>
<text x="1512" y="17.2" font-size="12.3" fill="#fff" text-anchor="middle" textLength="26.2" lengthAdjust="spacingAndGlyphs">15:24</text>
<text x="1512" y="34.3" font-size="12.3" fill="#fff" text-anchor="middle" textLength="57.7" lengthAdjust="spacingAndGlyphs">28/05/2018</text>
<path d="M1558.8,13 H1575 V25 H1563 L1560.5,28 V25 H1558.8 Z" fill="#fff"/>
<g fill="#222"><rect x="1561" y="16" width="12" height="1"/><rect x="1561" y="18.5" width="12" height="1"/><rect x="1561" y="21" width="9" height="1"/></g>
<circle cx="1574.6" cy="28.3" r="7.8" fill="#2b2b2b" stroke="#6a6a6a" stroke-width="1.2"/>
<text x="1574.6" y="32.6" font-size="11.5" font-weight="bold" fill="#fff" text-anchor="middle">1</text>
<rect x="1595" y="1" width="1" height="40" fill="#555"/>
</svg>
</div>
</body></html>
